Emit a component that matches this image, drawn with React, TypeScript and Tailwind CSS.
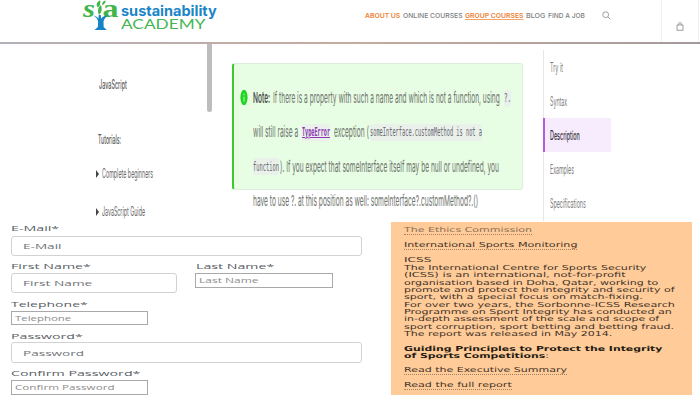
import { useLayoutEffect, useRef, type ReactNode } from "react";

/* A single line of text stretched or condensed horizontally to fill its box. */
function Fit({ className = "", children }: { className?: string; children: ReactNode }) {
  const box = useRef<HTMLDivElement>(null);
  const line = useRef<HTMLSpanElement>(null);
  useLayoutEffect(() => {
    const apply = () => {
      if (!box.current || !line.current) return;
      const natural = line.current.offsetWidth;
      if (natural > 0) line.current.style.transform = `scaleX(${box.current.clientWidth / natural})`;
    };
    apply();
    document.fonts?.ready.then(apply);
  }, []);
  return (
    <div ref={box} className={`flex shrink-0 items-center ${className}`}>
      <span ref={line} className="block w-max shrink-0 origin-left whitespace-nowrap">
        {children}
      </span>
    </div>
  );
}

function Logo() {
  return (
    <div className="flex h-[32px] w-[136px] shrink-0">
      <svg className="h-[32px] w-[37px] shrink-0 overflow-visible" viewBox="0 0 37 32">
        <g fill="#3fb54a" fontFamily="Liberation Serif, serif" fontWeight="700" fontSize="25">
          <text x="1" y="16.500" textLength="12" lengthAdjust="spacingAndGlyphs" fontStyle="italic">s</text>
          <text x="20.500" y="16.500" textLength="16" lengthAdjust="spacingAndGlyphs">a</text>
        </g>
        <path d="M11.500 15.500c2.300.4 4 1.600 4.800 3.200l.5-3.700h2l.4 3.700c1.200-2 3.800-3.200 7.300-3.400-2.600 1.600-4.600 3.700-5 6.200l.2 5.500 3 3H12.500l3.400-3 .2-5.500c-.4-2.400-2-4.500-4.600-6z" fill="#1683c6" />
        <path d="M17 15c-2-4.500-.5-8 2-10 1.200 3.500 1 7-2 10zM15.800 7.500c-2-2.700-1.200-5.500 2.400-7.300.5 3.200.1 5.500-2.400 7.300zM20 5c.1-2.600 1.200-3.900 3.600-4.400 0 2.700-1.200 4.100-3.600 4.400z" fill="#3fb54a" />
      </svg>
      <div className="flex flex-col pl-[2px] pt-[2px]">
        <Fit className="h-[17px] w-[96px] font-[Inter,sans-serif] text-[14.500px] font-bold leading-[17px] text-[#1b86c6]">sustainability</Fit>
        <Fit className="h-[10px] w-[85px] font-[Lato,sans-serif] text-[14px] leading-[10px] text-[#45b653]">ACADEMY</Fit>
      </div>
    </div>
  );
}

function Header() {
  return (
    <header className="flex h-[42px] shrink-0 bg-white pl-[82px]">
      <Logo />
      <nav className="ml-[147px] flex h-[31px] items-center font-[Inter,sans-serif] text-[6.800px] font-semibold leading-[8px] text-[#7b7e80]">
        <Fit className="w-[35px] text-[#ee7f35]">ABOUT US</Fit>
        <Fit className="ml-[3px] w-[60px] font-medium">ONLINE COURSES</Fit>
        <Fit className="ml-[2px] w-[58px] text-[#ee7f35]">
          <span className="underline decoration-[#f0a56d] decoration-[1px] underline-offset-[1px]">GROUP COURSES</span>
        </Fit>
        <Fit className="ml-[3px] w-[19px] font-medium">BLOG</Fit>
        <Fit className="ml-[3px] w-[37px] font-medium">FIND A JOB</Fit>
      </nav>
      <svg className="ml-[17px] mt-[11px] h-[9px] w-[9px]" viewBox="0 0 9 9" fill="none" stroke="#85878a" strokeWidth="0.800">
        <circle cx="3.700" cy="3.700" r="2.900" />
        <path d="M5.900 5.900 8.400 8.400" />
      </svg>
      <div className="ml-auto flex w-[38px] border-x border-[#f1f1f1] pl-[14px] pt-[22px]">
        <svg className="h-[9px] w-[8px]" viewBox="0 0 8 9" fill="none" stroke="#85878a" strokeWidth="0.800">
          <path d="M1 3h6v5.300H1zM2.500 3V1.800c0-1.500 3-1.500 3 0V3" />
        </svg>
      </div>
      <div className="w-[1px] shrink-0" />
    </header>
  );
}

function Sidebar() {
  return (
    <aside className="flex w-[207px] shrink-0 flex-col pl-[96px] font-[Inter,sans-serif] text-[12.500px] leading-[16px] text-[#686868]">
      <Fit className="ml-[3px] mt-[33px] h-[16px] w-[28px] font-medium text-[#5a5a5a]">JavaScript</Fit>
      <Fit className="ml-[2px] mt-[39px] h-[16px] w-[23px] font-medium text-[#5a5a5a]">Tutorials:</Fit>
      <div className="mt-[18px] flex h-[16px] items-center gap-[3px]">
        <i className="h-0 w-0 border-y-[4px] border-l-[3px] border-y-transparent border-l-[#444]" />
        <Fit className="w-[51px]">Complete beginners</Fit>
      </div>
      <div className="mt-[22px] flex h-[16px] items-center gap-[3px]">
        <i className="h-0 w-0 border-y-[4px] border-l-[3px] border-y-transparent border-l-[#444]" />
        <Fit className="w-[43px]">JavaScript Guide</Fit>
      </div>
    </aside>
  );
}

const code = "h-[17px] rounded-[2px] bg-[#e9f1ea] font-['DejaVu_Sans_Mono',monospace] text-[12px]";

function Note() {
  return (
    <section className="ml-[20px] mt-[19px] h-[127px] w-[291px] shrink-0 rounded-[3px] border border-l-2 border-[#dcefdc] border-l-[#3bc92e] bg-[#e7fee4] font-[Inter,sans-serif] text-[15px] leading-[18px] text-[#70746e]">
      <div className="flex pl-[6px] pt-[17px]">
        <svg className="mt-[8px] h-[17px] w-[8px] shrink-0" viewBox="0 0 8 17">
          <ellipse cx="4" cy="8.500" rx="3.600" ry="7.700" fill="#1fd51f" />
          <path d="M4 4.500v1.800M4 7.700v5" stroke="#b9f7b4" strokeWidth="1" />
        </svg>
        <div className="flex flex-col pl-[5px]">
          <div className="flex h-[34.300px] items-center">
            <Fit className="w-[17px] font-semibold text-[#505050]">Note:</Fit>
            <Fit className="ml-[3px] w-[227px]">If there is a property with such a name and which is not a function, using</Fit>
            <Fit className={`ml-[4px] w-[7px] text-[#6b6872] ${code}`}>?.</Fit>
          </div>
          <div className="flex h-[34.300px] items-center">
            <Fit className="w-[45px]">will still raise a</Fit>
            <Fit className={`ml-[4px] w-[28px] text-[#8f35b5] ${code}`}>
              <span className="font-bold underline">TypeError</span>
            </Fit>
            <Fit className="ml-[4px] w-[35px]">exception (</Fit>
            <Fit className={`ml-[1px] w-[112px] text-[#6b6872] ${code}`}>someInterface.customMethod is not a</Fit>
          </div>
          <div className="flex h-[34.300px] items-center">
            <Fit className={`w-[26px] text-[#6b6872] ${code}`}>function</Fit>
            <Fit className="ml-[1px] w-[219px]">). If you expect that someInterface itself may be null or undefined, you</Fit>
          </div>
          <div className="flex h-[34.300px] items-center">
            <Fit className="w-[225px]">have to use ?. at this position as well: someInterface?.customMethod?.()</Fit>
          </div>
        </div>
      </div>
    </section>
  );
}

function Contents() {
  const item = "flex h-[34px] items-center pl-[6px] pt-[2px]";
  return (
    <nav className="ml-[20px] mt-[6px] h-[171px] w-[68px] shrink-0 border-l border-[#e6e6e6] font-[Inter,sans-serif] text-[12.500px] leading-[16px] text-[#7c7c7c]">
      <div className={item}><Fit className="w-[13px]">Try it</Fit></div>
      <div className={item}><Fit className="w-[17px]">Syntax</Fit></div>
      <div className="-ml-px flex h-[34px] items-center border-l-2 border-[#b65bdc] bg-[#f6ecfd] pl-[5px] pt-[2px] text-[#38333c]">
        <Fit className="w-[30px] font-medium">Description</Fit>
      </div>
      <div className={item}><Fit className="w-[24px]">Examples</Fit></div>
      <div className={item}><Fit className="w-[36px]">Specifications</Fit></div>
    </nav>
  );
}

const label = "h-[10px] text-[8px] leading-[10px] text-[#596065]";
const large = "flex items-center rounded-[3px] border border-[#d2d2d2] pl-[11px] text-[8px] leading-[10px] text-[#6f7478]";
const small = "flex items-center border border-[#a9a9a9] pl-[3px] text-[7px] leading-[9px] text-[#8d8d8d]";

function SignupForm() {
  return (
    <form className="flex w-[391px] shrink-0 flex-col pl-[11px] pt-[2px] font-['Open_Sans',sans-serif]">
      <Fit className={`w-[48px] ${label}`}>E-Mail*</Fit>
      <div className={`mt-[3px] h-[20px] w-[351px] ${large}`}><Fit className="w-[39px]">E-Mail</Fit></div>
      <div className="mt-[5px] flex h-[33px]">
        <div className="w-[184px]">
          <Fit className={`w-[80px] ${label}`}>First Name*</Fit>
          <div className={`mt-[2px] h-[20px] w-[166px] ${large}`}><Fit className="w-[70px]">First Name</Fit></div>
        </div>
        <div>
          <Fit className={`ml-[1px] w-[78px] ${label}`}>Last Name*</Fit>
          <div className={`mt-[2px] h-[15px] w-[138px] ${small}`}><Fit className="w-[60px]">Last Name</Fit></div>
        </div>
      </div>
      <Fit className={`mt-[5px] w-[77px] ${label}`}>Telephone*</Fit>
      <div className={`mt-[2px] h-[14px] w-[137px] ${small}`}><Fit className="w-[57px]">Telephone</Fit></div>
      <Fit className={`mt-[6px] w-[71px] ${label}`}>Password*</Fit>
      <div className={`mt-[1px] h-[21px] w-[351px] ${large}`}><Fit className="w-[61px]">Password</Fit></div>
      <Fit className={`mt-[5px] w-[130px] ${label}`}>Confirm Password*</Fit>
      <div className={`mt-[2px] h-[15px] w-[137px] ${small}`}><Fit className="w-[100px]">Confirm Password</Fit></div>
    </form>
  );
}

const row = "h-[7.400px]";
const link = "h-[7.400px] border-b border-dotted border-[#a38160]";

function Report() {
  return (
    <article className="mt-[1px] h-[173px] w-[301px] shrink-0 bg-[#fecb99] pl-[13px] pt-[5.400px] font-['DejaVu_Sans',Verdana,sans-serif] text-[6.900px] leading-[7.400px] text-[#3e3126]">
      <Fit className={`w-[128px] text-[#8d7054] ${link}`}>The Ethics Commission</Fit>
      <Fit className={`mt-[7.500px] w-[173px] ${link}`}>International Sports Monitoring</Fit>
      <Fit className={`mt-[7.400px] w-[28px] ${row}`}>ICSS</Fit>
      <Fit className={`mt-[0.300px] w-[243px] ${row}`}>The International Centre for Sports Security</Fit>
      <Fit className={`w-[221px] ${row}`}>(ICSS) is an international, not-for-profit</Fit>
      <Fit className={`w-[254px] ${row}`}>organisation based in Doha, Qatar, working to</Fit>
      <Fit className={`w-[271px] ${row}`}>promote and protect the integrity and security of</Fit>
      <Fit className={`w-[238px] ${row}`}>sport, with a special focus on match-fixing.</Fit>
      <Fit className={`w-[271px] ${row}`}>For over two years, the Sorbonne-ICSS Research</Fit>
      <Fit className={`w-[267px] ${row}`}>Programme on Sport Integrity has conducted an</Fit>
      <Fit className={`w-[256px] ${row}`}>in-depth assessment of the scale and scope of</Fit>
      <Fit className={`w-[270px] ${row}`}>sport corruption, sport betting and betting fraud.</Fit>
      <Fit className={`w-[208px] ${row}`}>The report was released in May 2014.</Fit>
      <Fit className={`mt-[7.200px] w-[259px] font-bold text-[#241a12] ${row}`}>Guiding Principles to Protect the Integrity</Fit>
      <Fit className={`w-[145px] text-[#241a12] ${row}`}><b>of Sports Competitions</b>:</Fit>
      <Fit className={`mt-[7.200px] w-[163px] ${link}`}>Read the Executive Summary</Fit>
      <Fit className={`mt-[7.200px] w-[108px] ${link}`}>Read the full report</Fit>
    </article>
  );
}

export default function App() {
  return (
    <div className="flex h-[400px] w-[700px] flex-col overflow-hidden bg-white">
      <Header />
      <div className="h-[2px] shrink-0 bg-linear-to-r from-[#b4b0b8] via-[#c6aba0] to-[#a39a9b]" />
      <main className="flex h-[177px] shrink-0">
        <Sidebar />
        <div className="h-[68px] w-[5px] shrink-0 rounded-b-full bg-[#bdbdbd]" />
        <Note />
        <Contents />
      </main>
      <div className="flex h-[179px] shrink-0">
        <SignupForm />
        <Report />
      </div>
    </div>
  );
}
